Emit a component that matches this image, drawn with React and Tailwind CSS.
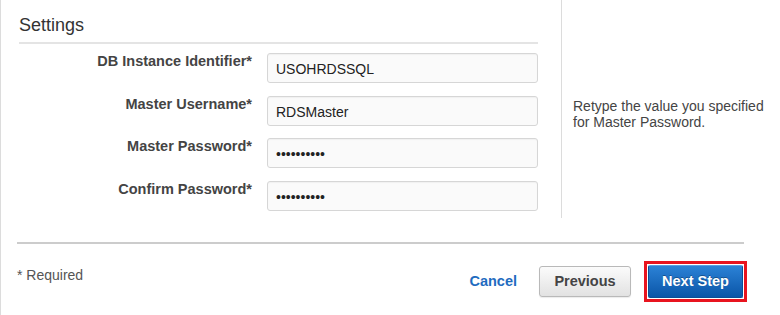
import React from 'react';

const fields = [
  { label: 'DB Instance Identifier*', value: 'USOHRDSSQL', type: 'text' },
  { label: 'Master Username*', value: 'RDSMaster', type: 'text' },
  { label: 'Master Password*', value: '1234567890', type: 'password' },
  { label: 'Confirm Password*', value: '1234567890', type: 'password' },
];

const App = () => {
  return (
    <div
      className="w-[780px] h-[315px] overflow-hidden bg-white border-l border-[#dcdcdc]"
      style={{ fontFamily: '"Liberation Sans", Arial, sans-serif' }}
    >
      <div className="flex h-[218px]">
        <div className="w-[560px] pl-[18px] pr-[23px]">
          <h2 className="pt-[13px] pb-[5px] text-[18px] leading-[24px] text-[#333] border-b-2 border-[#e4e4e4]">
            Settings
          </h2>
          <div className="flex flex-col gap-[12.6px] pt-[9px]">
            {fields.map((f) => (
              <div key={f.label} className="flex items-start">
                <label className="w-[233px] pr-[0px] text-right text-[14.5px] leading-[17px] font-bold text-[#444]">
                  {f.label}
                </label>
                <input
                  type={f.type}
                  defaultValue={f.value}
                  readOnly
                  className="ml-[15px] w-[271px] h-[30px] px-[8px] pt-[2px] text-[14px] text-[#222] bg-[#fafafa] border border-[#d6d6d6] rounded-[3px] shadow-[inset_0_1px_1px_rgba(0,0,0,0.04)] outline-none"
                  style={{ fontFamily: '"Liberation Sans", Arial, sans-serif' }}
                />
              </div>
            ))}
          </div>
        </div>
        <div className="flex-1 border-l border-[#dcdcdc] pl-[11px] pt-[98px]">
          <p className="w-[200px] text-[14px] leading-[16px] text-[#444]">
            Retype the value you specified for Master Password.
          </p>
        </div>
      </div>

      <div className="ml-[16px] w-[727px] h-[2px] mt-[24px] bg-[#cccccc]" />

      <div className="flex justify-between items-start pl-[16px] pr-[33px] pt-[17px]">
        <span className="mt-[6px] text-[14px] leading-[16px] text-[#555]">* Required</span>
        <div className="flex items-center">
          <a href="#" className="text-[14.5px] font-bold text-[#1f6cc0]">
            Cancel
          </a>
          <button className="ml-[22px] w-[92px] h-[31px] rounded-[3px] border border-[#b9b9b9] bg-gradient-to-b from-[#fbfbfb] to-[#e2e2e2] text-[14.5px] font-bold text-[#444] shadow-[0_1px_1px_rgba(0,0,0,0.08)]">
            Previous
          </button>
          <div className="ml-[13px] border-[3px] border-[#e8141f] p-[1px] bg-white">
            <button className="block w-[95px] h-[33px] rounded-[2px] border border-[#0b4f96] border-t-[#5a9ee0] bg-gradient-to-b from-[#2b82d6] to-[#0a56a8] text-[14.5px] font-bold text-white [text-shadow:0_-1px_0_rgba(0,0,0,0.3)]">
              Next Step
            </button>
          </div>
        </div>
      </div>
    </div>
  );
};

export default App;
